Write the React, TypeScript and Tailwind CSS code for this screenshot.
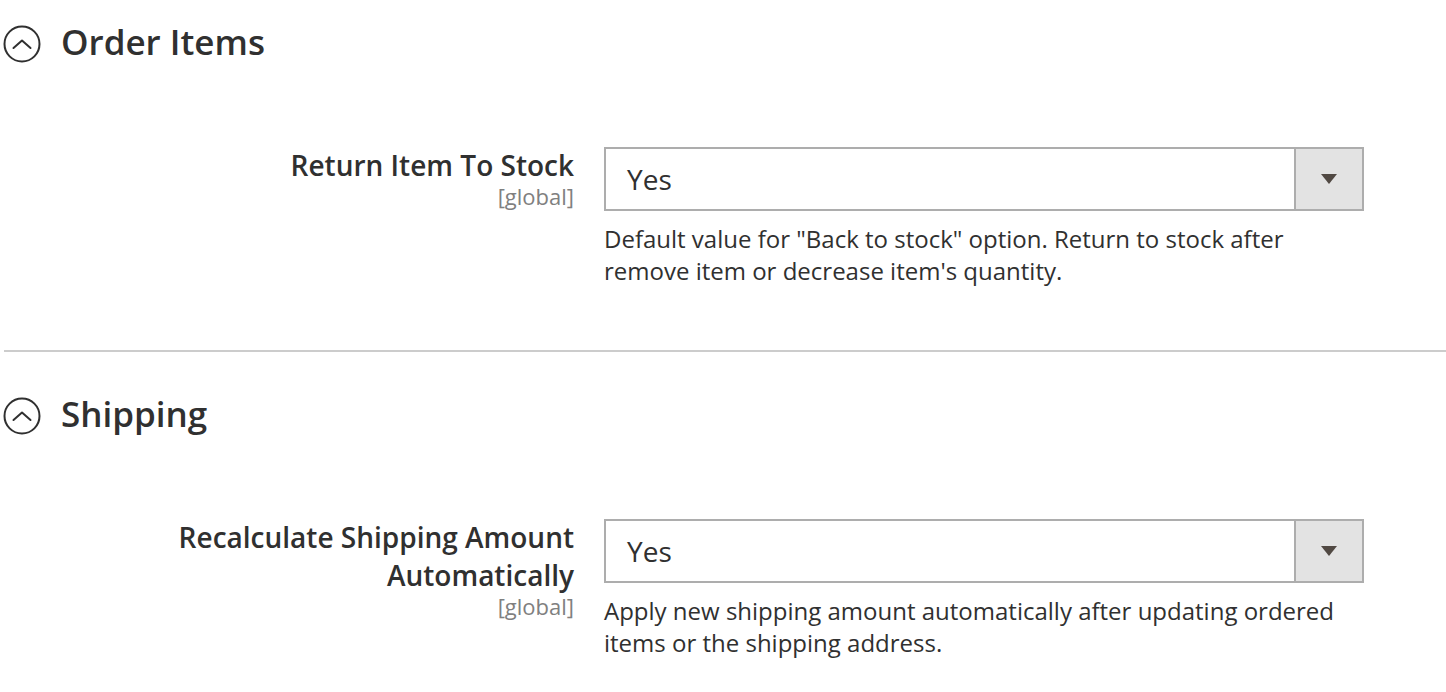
import { ReactNode } from 'react';

const font = { fontFamily: '"Open Sans", "Noto Sans", sans-serif' };

const SectionIcon = () => (
  <svg width="38" height="38" viewBox="0 0 38 38" fill="none" className="shrink-0">
    <circle cx="19" cy="19" r="17.5" stroke="#303030" strokeWidth="2" />
    <polyline points="10.5,23 19,15.5 27.5,23" stroke="#303030" strokeWidth="2" strokeLinecap="round" strokeLinejoin="round" />
  </svg>
);

const SectionHeader = ({ title }: { title: string }) => (
  <div className="flex items-center gap-[20px] h-[48px] pl-[3px]">
    <div className="mt-[4px]">
      <SectionIcon />
    </div>
    <h2 className="text-[35px] font-semibold text-[#303030] leading-[48px]">{title}</h2>
  </div>
);

interface FieldRowProps {
  label: ReactNode;
  value: string;
  note: ReactNode;
}

const FieldRow = ({ label, value, note }: FieldRowProps) => (
  <div className="flex mt-[80px]">
    <div className="w-[574px] shrink-0 text-right">
      <div className="text-[28px] font-semibold leading-[38px] text-[#303030]">{label}</div>
      <div className="text-[22px] leading-[24px] text-[#808080]">[global]</div>
    </div>
    <div className="w-[760px] ml-[30px]">
      <div className="mt-[1px] flex h-[64px] border-2 border-[#adadad] bg-white">
        <div className="flex-1 flex items-center pl-[21px] text-[28px] text-[#303030]">{value}</div>
        <div className="w-[68px] flex items-center justify-center bg-[#e3e3e3] border-l-2 border-[#adadad]">
          <svg width="16" height="10" viewBox="0 0 16 10">
            <polygon points="0,0 16,0 8,10" fill="#514943" />
          </svg>
        </div>
      </div>
      <p className="mt-[12px] text-[24px] leading-[32px] text-[#303030]">{note}</p>
    </div>
  </div>
);

export default function App() {
  return (
    <div className="w-[1446px] h-[692px] bg-white pt-[18px] overflow-hidden" style={font}>
      <SectionHeader title="Order Items" />
      <FieldRow
        label="Return Item To Stock"
        value="Yes"
        note={
          <>
            Default value for "Back to stock" option. Return to stock after
            <br />
            remove item or decrease item's quantity.
          </>
        }
      />
      <div className="mt-[63px] ml-[4px] h-[2px] bg-[#cccccc]" />
      <div className="mt-[38px]">
        <SectionHeader title="Shipping" />
      </div>
      <FieldRow
        label={
          <>
            Recalculate Shipping Amount
            <br />
            Automatically
          </>
        }
        value="Yes"
        note={
          <>
            Apply new shipping amount automatically after updating ordered
            <br />
            items or the shipping address.
          </>
        }
      />
    </div>
  );
}
